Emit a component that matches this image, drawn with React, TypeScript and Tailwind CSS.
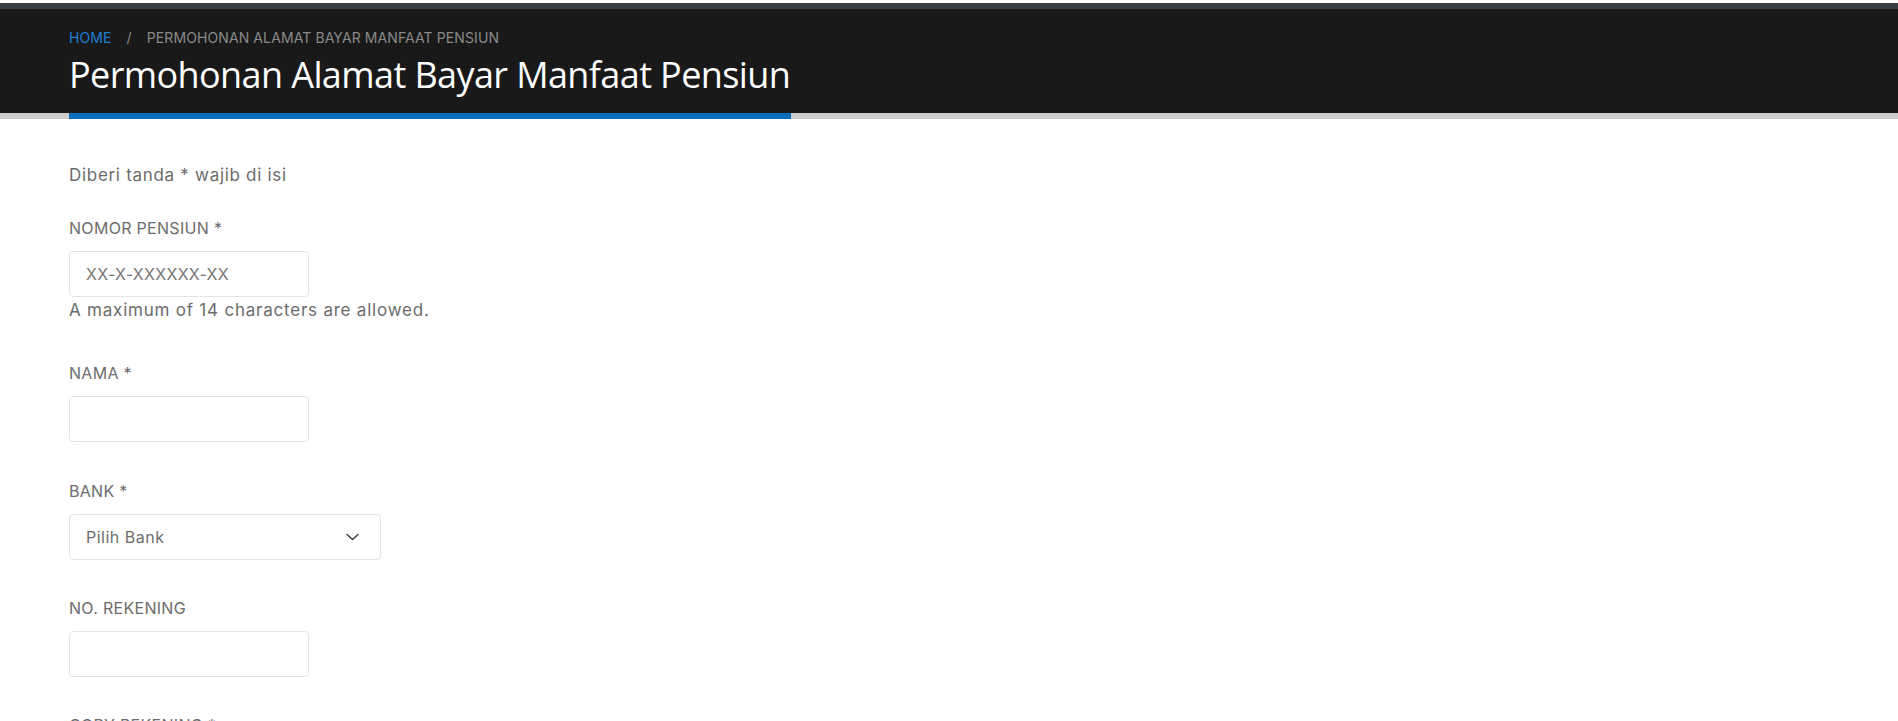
import React from "react";

function Field({ label, children, className = "" }: { label: string; children: React.ReactNode; className?: string }) {
  return (
    <div className={className}>
      <label className="block text-[16px] leading-6 mb-[11px] uppercase tracking-[0.3px]">{label}</label>
      {children}
    </div>
  );
}

function TextInput({ placeholder = "" }: { placeholder?: string }) {
  return (
    <input
      type="text"
      placeholder={placeholder}
      className="block w-[240px] h-[46px] border border-[#e4e4e4] rounded-[4px] px-4 text-[16px] tracking-[0.3px] text-[#6c6c6c] placeholder:text-[#777] outline-none bg-white"
    />
  );
}

export default function App() {
  return (
    <div className="min-h-screen bg-white pt-[3px]" style={{ fontFamily: "Inter, 'Noto Sans', sans-serif" }}>
      <header>
        <div className="h-[6px] bg-[#3a3f44]" />
        <div className="bg-[#191919] h-[104px] px-[69px] pt-[19px]">
          <nav className="flex items-center text-[14px] leading-5 uppercase tracking-[0.1px]">
            <a className="text-[#1e7fd6]">Home</a>
            <span className="px-[15px] text-[#8a8a8a]">/</span>
            <span className="text-[#8a8a8a]">Permohonan Alamat Bayar Manfaat Pensiun</span>
          </nav>
          <h1
            className="mt-[9px] text-white text-[36px] leading-[36px] tracking-[-0.6px]"
            style={{ fontFamily: "'Open Sans', sans-serif" }}
          >
            Permohonan Alamat Bayar Manfaat Pensiun
          </h1>
        </div>
        <div className="h-[6px] bg-[#cccccc] pl-[69px]">
          <div className="h-full w-[722px] bg-[#0a6ebd]" />
        </div>
      </header>

      <main className="px-[69px] pt-[44px] text-[#6c6c6c]">
        <p className="text-[17px] leading-6 tracking-[0.7px]">Diberi tanda * wajib di isi</p>

        <Field label="Nomor Pensiun *" className="mt-[29px]">
          <TextInput placeholder="XX-X-XXXXXX-XX" />
          <p className="text-[17px] leading-6 mt-px tracking-[0.78px]">A maximum of 14 characters are allowed.</p>
        </Field>

        <Field label="Nama *" className="mt-[39px]">
          <TextInput />
        </Field>

        <Field label="Bank *" className="mt-[37px]">
          <div className="relative w-[312px] h-[46px] border border-[#e4e4e4] rounded-[4px] flex items-center px-4 text-[16px] tracking-[0.5px] text-[#6c6c6c]">
            <span>Pilih Bank</span>
            <svg
              className="absolute right-[21px] top-1/2 -translate-y-1/2"
              width="13"
              height="7"
              viewBox="0 0 13 7"
              fill="none"
              stroke="#343a40"
              strokeWidth="1.4"
              strokeLinecap="round"
              strokeLinejoin="round"
            >
              <polyline points="1,1 6.5,6 12,1" />
            </svg>
          </div>
        </Field>

        <Field label="No. Rekening" className="mt-[36px]">
          <TextInput />
        </Field>

        <Field label="Copy Rekening *" className="mt-[36px]">
          <TextInput />
        </Field>
      </main>
    </div>
  );
}
